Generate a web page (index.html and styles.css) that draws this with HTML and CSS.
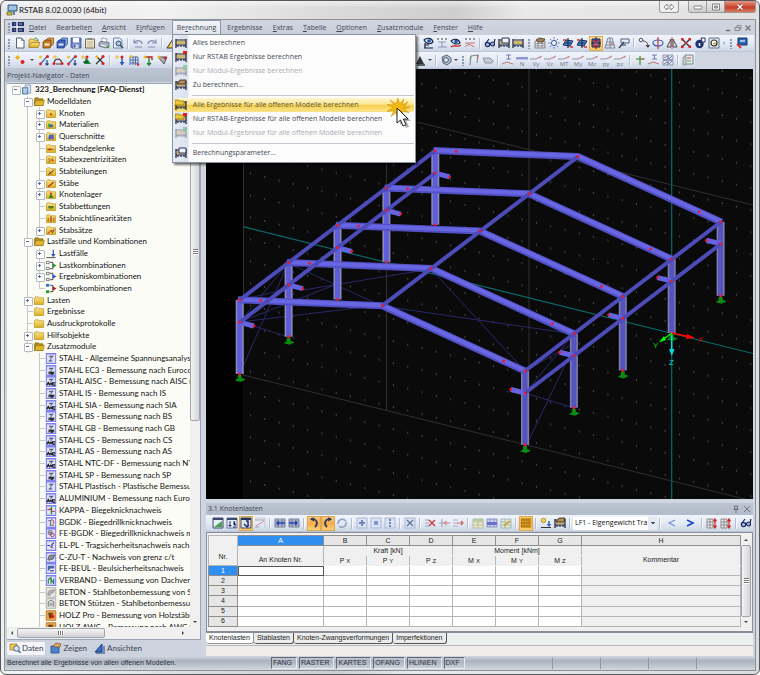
FILE: index.html
```html
<!DOCTYPE html>
<html lang="de">
<head>
<meta charset="utf-8">
<title>RSTAB 8.02.0030 (64bit)</title>
<link rel="stylesheet" href="styles.css">
</head>
<body>
<svg class="sprite" aria-hidden="true">
  <defs>
    <linearGradient id="gold" x1="0" y1="0" x2="0" y2="1"><stop offset="0" stop-color="#fbe58a"/><stop offset="1" stop-color="#dcae1c"/></linearGradient>
  </defs>
  <!-- navigator -->
  <symbol id="folder" viewBox="0 0 12 12"><path d="M1 3.2 2 2h3.2l.9 1H11v7.4H1z" fill="url(#gold)" stroke="#b08a20" stroke-width=".7"/></symbol>
  <symbol id="open" viewBox="0 0 12 12"><path d="M1 3.2 2 2h3.2l.9 1H10.4v7.4H1z" fill="#b08c18" stroke="#806410" stroke-width=".7"/><path d="M1 10.4 2.6 5H12l-1.6 5.4z" fill="#dfb62e" stroke="#806410" stroke-width=".5"/></symbol>
  <symbol id="root" viewBox="0 0 12 12"><path d="M4 1h6v9H4z" fill="#cfe0f2" stroke="#6d8cb0" stroke-width=".8"/><path d="M1 4h6v7H1z" fill="#7ba2cc" stroke="#446a94" stroke-width=".8"/><path d="M2 6h4M2 8h4M3 4v7M5 4v7M8 2v8" stroke="#e7f1fb" stroke-width=".6"/></symbol>
  <symbol id="f-node" viewBox="0 0 12 12"><use href="#folder"/><circle cx="6" cy="6.8" r="1.1" fill="#d11"/></symbol>
  <symbol id="f-mat" viewBox="0 0 12 12"><use href="#folder"/><path d="M3 5h2v4H3z" fill="#3a9b3a"/><path d="M5 6h3v3H5z" fill="#2f60c0"/></symbol>
  <symbol id="f-sec" viewBox="0 0 12 12"><use href="#folder"/><path d="M4 4h5v5H3z" fill="#3465d0"/><path d="m5 9 4-4" stroke="#e44"/></symbol>
  <symbol id="f-hinge" viewBox="0 0 12 12"><use href="#folder"/><path d="M2 7h7" stroke="#7a5a10"/><circle cx="4.5" cy="7" r="1.2" fill="#d22"/></symbol>
  <symbol id="f-ecc" viewBox="0 0 12 12"><use href="#folder"/><path d="m3 9 5-4M3 5l2 1" stroke="#8a5010"/><circle cx="8" cy="7" r="1" fill="#c33"/></symbol>
  <symbol id="f-div" viewBox="0 0 12 12"><use href="#folder"/><path d="m3 9.5 6-5" stroke="#223"/><path d="m4 6 3 3" stroke="#c22" stroke-width=".8"/></symbol>
  <symbol id="f-bar" viewBox="0 0 12 12"><use href="#folder"/><path d="m3 9.5 6-5" stroke="#b52222" stroke-width="1.2"/></symbol>
  <symbol id="f-sup" viewBox="0 0 12 12"><use href="#folder"/><path d="m6 5 2.5 4.5h-5z" fill="#168a16"/><circle cx="6" cy="4.8" r="1" fill="#d11"/></symbol>
  <symbol id="f-bed" viewBox="0 0 12 12"><use href="#folder"/><path d="M3 6.5h6" stroke="#165016" stroke-width="1.4"/><path d="m4 9 2-2 2 2" stroke="#168a16" fill="none"/></symbol>
  <symbol id="f-nl" viewBox="0 0 12 12"><use href="#folder"/><path d="M6 3.5v6" stroke="#c22" stroke-width="1.3"/><path d="M3 5v4M9 5v4" stroke="#8a6a10"/></symbol>
  <symbol id="f-set" viewBox="0 0 12 12"><use href="#folder"/><path d="m2.5 9.5 4-4 1 3 2-4" stroke="#8c1c1c" fill="none"/></symbol>
  <symbol id="lf" viewBox="0 0 12 12"><path d="M1 10.5h10" stroke="#444"/><path d="M8.5 2v6" stroke="#3559b8" stroke-width="1.4"/><path d="M6 6.5h5L8.500 10z" fill="#3559b8"/></symbol>
  <symbol id="lk" viewBox="0 0 12 12"><path d="M1 1.500h3v2.500H1zM1 8h3v2.500H1z" fill="#fff" stroke="#555" stroke-width=".8"/><path d="M5 2.500h3v7H5" fill="none" stroke="#333"/><path d="m8 3.500 4 2.500-4 2.500z" fill="#1d9a2a"/></symbol>
  <symbol id="ek" viewBox="0 0 12 12"><path d="M1 1.500h3v2.500H1zM1 8h3v2.500H1z" fill="#fff" stroke="#555" stroke-width=".8"/><path d="M5 2.500h3v7H5" fill="none" stroke="#333"/><path d="m8 3.500 4 2.500-4 2.500z" fill="#2b6bd4"/></symbol>
  <symbol id="sk" viewBox="0 0 12 12"><path d="M.6 1h3.500v3H.6z" fill="#2b6bd4"/><path d="M.6 8h3.500v3H.6z" fill="#1d9a2a"/><path d="M5 2.500h3v7H5" fill="none" stroke="#333"/><path d="m8 3.500 4 2.500-4 2.500z" fill="#c81818"/></symbol>
  <symbol id="box" viewBox="0 0 12 12"><path d="M.8.8h10.400v10.400H.8z" fill="#dfe2f4" stroke="#8080f0" stroke-width="1.400"/></symbol>
  <symbol id="m-i" viewBox="0 0 12 12"><use href="#box"/><path d="M4 3h5L8 4.500H7L6 8h1.500L7 9.200H3L3.800 8H5l1-3.500H4z" fill="#56627e"/></symbol>
  <symbol id="m-s1" viewBox="0 0 12 12"><use href="#m-i"/><path d="M4 10V7M6 10V8h1.500v2zM9 10V7" stroke="#111" stroke-width="1.100" fill="none"/></symbol>
  <symbol id="m-s2" viewBox="0 0 12 12"><use href="#m-i"/><path d="m1.500 10 1.500-3 1.500 3M6 7.500v2.500M7.500 10V7.500h3M8 10h2.500" stroke="#111" stroke-width="1.200" fill="none"/></symbol>
  <symbol id="m-kappa" viewBox="0 0 12 12"><use href="#box"/><path d="M6.500 2v8" stroke="#188a30" stroke-width="1.400"/><path d="M2 5h4M6 5l-1.500-1.500M10 7H7" stroke="#c22" fill="none"/></symbol>
  <symbol id="m-bgdk" viewBox="0 0 12 12"><use href="#box"/><path d="M3 4h3l-1 5h4" stroke="#556" fill="none"/><path d="M6 3c3 0 4 2 2 5" stroke="#c22" fill="none"/></symbol>
  <symbol id="m-fe" viewBox="0 0 12 12"><use href="#box"/><path d="M3 3h4v4H3zM5 3v4M3 5h4" stroke="#667" stroke-width=".8" fill="none"/><circle cx="7.500" cy="7.500" r="2" stroke="#a34" fill="none"/></symbol>
  <symbol id="m-elpl" viewBox="0 0 12 12"><use href="#box"/><path d="M2 6h3M7 9V5l2-2" stroke="#2244b0" fill="none" stroke-width="1.200"/><path d="M5 7.500h2" stroke="#c22"/></symbol>
  <symbol id="m-czut" viewBox="0 0 12 12"><use href="#box"/><path d="m2.500 8 1.500-4 6-1-1.500 4.500-5 1.500z" fill="#8b93a3" stroke="#333" stroke-width=".7"/></symbol>
  <symbol id="m-beul" viewBox="0 0 12 12"><use href="#box"/><path d="M2.500 3v6l3-3h4V3z" fill="#4468a8"/><path d="M5 8.500h4" stroke="#222"/></symbol>
  <symbol id="m-verb" viewBox="0 0 12 12"><use href="#box"/><path d="M3 9.500V5l3-2v6.500M6 4l3 5.500" stroke="#14802a" fill="none" stroke-width="1.100"/><path d="M9 4v5.500" stroke="#24b"/></symbol>
  <symbol id="m-beton" viewBox="0 0 12 12"><path d="M.8.8h10.400v10.400H.8z" fill="#e6e6e2" stroke="#aaa"/><path d="m2.500 7 1.500-3 6-1-2 3.500h-2L5 9H2.500z" fill="#b5b5b0" stroke="#777" stroke-width=".6"/></symbol>
  <symbol id="m-stz" viewBox="0 0 12 12"><path d="M.8.8h10.400v10.400H.8z" fill="#e6e6e2" stroke="#aaa"/><path d="M3 9.500V4l3-1.500L9 4v5.500M5 9V5M7 9V5" stroke="#777" fill="none"/></symbol>
  <symbol id="m-holz" viewBox="0 0 12 12"><path d="M.8.8h10.400v10.400H.8z" fill="#e8a552" stroke="#c07a28"/><path d="M3 3h5v2H6v4H4z" fill="#6b3c12"/><circle cx="7.500" cy="7" r="2" fill="#c8201c"/></symbol>
  <!-- toolbars -->
  <symbol id="new" viewBox="0 0 12 12"><path d="M2.500 1h5L10 3.500V11H2.500z" fill="#fff" stroke="#56606e"/><path d="M7.500 1v2.500H10" fill="none" stroke="#56606e" stroke-width=".7"/></symbol>
  <symbol id="openf" viewBox="0 0 12 12"><path d="M1 10.500V3l1-1h3l1 1.200h4v2" fill="#f3d268" stroke="#a77f1a" stroke-width=".8"/><path d="m1 10.500 2.200-5H12l-2 5z" fill="url(#gold)" stroke="#a77f1a" stroke-width=".8"/><path d="M6 2c2-2 4 0 4 1.500" stroke="#2f9030" fill="none"/></symbol>
  <symbol id="stack" viewBox="0 0 12 12"><path d="M4 3 6 1h5.500v6L9.500 9z" fill="#e2a048" stroke="#7a4a10" stroke-width=".7"/><path d="M1 5 3 3h6v6l-1 2H1z" fill="#c47a24" stroke="#5c3608" stroke-width=".7"/><path d="M2.500 6.500h5v2h-5z" fill="#fff3d0"/></symbol>
  <symbol id="stackb" viewBox="0 0 12 12"><path d="M4 3 6 1h5.500v6L9.500 9z" fill="#8aa8e0" stroke="#20408c" stroke-width=".7"/><path d="M1 5 3 3h6v6l-1 2H1z" fill="#3c64bc" stroke="#183070" stroke-width=".7"/><path d="M2.500 6.500h5v2h-5z" fill="#dfe9ff"/></symbol>
  <symbol id="save" viewBox="0 0 12 12"><path d="M1 1h10v10H2L1 10z" fill="#6a86c6" stroke="#38508c" stroke-width=".8"/><path d="M3 1h6v4.500H3z" fill="#fff"/><path d="M3.500 7.500h5V11h-5z" fill="#d7dde8"/><path d="M4 8h1.500v2.500H4z" fill="#38508c"/></symbol>
  <symbol id="clip" viewBox="0 0 12 12"><path d="M1.500 2h9v9h-9z" fill="#f3ead0" stroke="#77684a"/><path d="M3.500 1h5v2h-5z" fill="#8c8c8c"/><path d="M3 5h6M3 7h6M3 9h6" stroke="#a89a78" stroke-width=".7"/></symbol>
  <symbol id="print" viewBox="0 0 12 12"><path d="m3 5 1-4 5 1-.5 3" fill="#fff" stroke="#778" stroke-width=".7"/><path d="m1 6 2-1.500 8 1V9l-3 2-7-2z" fill="#a9b3c4" stroke="#56606e" stroke-width=".8"/><path d="m3 8 5 1.300" stroke="#fff"/><circle cx="10" cy="10" r="1.300" fill="#4a9a4a"/></symbol>
  <symbol id="preview" viewBox="0 0 12 12"><path d="M1.500 1h6L10 3v8H1.500z" fill="#e7eefa" stroke="#56709a" stroke-width=".8"/><circle cx="6.500" cy="6.500" r="2.500" fill="#aac8ee" stroke="#345"/><path d="m8.300 8.300 2.700 2.700" stroke="#345" stroke-width="1.500"/></symbol>
  <symbol id="undo" viewBox="0 0 12 12"><path d="M2 2.500V6h4" fill="none" stroke="#8090b0" stroke-width="1.200"/><path d="M2.500 5.500C5 2.500 10 3.500 10 7M3 10h7" fill="none" stroke="#8090b0" stroke-width="1.200"/></symbol>
  <symbol id="redo" viewBox="0 0 12 12"><path d="M10 2.500V6H6" fill="none" stroke="#8090b0" stroke-width="1.200"/><path d="M9.500 5.500C7 2.500 2 3.500 2 7M2 10h7" fill="none" stroke="#8090b0" stroke-width="1.200"/></symbol>
  <symbol id="tri" viewBox="0 0 12 12"><path d="M1 11 7 2l5 9z" fill="#f5d24a" stroke="#333"/></symbol>
  <symbol id="barload" viewBox="0 0 12 12"><path d="m2.500 10 7-8" stroke="#4c6ca0" stroke-width="1.300"/><circle cx="2.500" cy="3" r="1.500" fill="#f0c030"/><circle cx="9.500" cy="2.500" r="1.500" fill="#d22"/><circle cx="2.500" cy="10" r="1.400" fill="#d22"/><path d="M9 6v5M7.500 9.500 9 11l1.500-1.500" stroke="#27408c" fill="none" stroke-width="1.200"/></symbol>
  <symbol id="spark" viewBox="0 0 12 12"><path d="M3.500 1v5M1 3.500h5M2 2l3 3M5 2 2 5" stroke="#f0b820"/><circle cx="8.500" cy="8" r="2" fill="#d22"/></symbol>
  <symbol id="arc" viewBox="0 0 12 12"><path d="M2 10c0-6 7-7 8 0M4 10h5" stroke="#444" fill="none" stroke-width="1.200"/><path d="M3 1v4M1 3h4" stroke="#f0b820"/><circle cx="2" cy="9.500" r="1.500" fill="#d22"/><circle cx="10" cy="9.500" r="1.500" fill="#d22"/></symbol>
  <symbol id="sup" viewBox="0 0 12 12"><path d="M3 1v4M1 3h4" stroke="#f0b820"/><path d="m6 3 5 7H4z" fill="#1c8c30"/><circle cx="7" cy="3" r="1.500" fill="#d22"/><path d="M3 8h5" stroke="#123"/></symbol>
  <symbol id="cross" viewBox="0 0 12 12"><path d="m2 2 8 8M10 2l-8 8" stroke="#333" stroke-width="1.200"/><circle cx="9" cy="2.500" r="1.500" fill="#d22"/><circle cx="3" cy="3" r="1.500" fill="#f0b820"/><circle cx="9" cy="9.500" r="1.500" fill="#d22"/></symbol>
  <symbol id="nload" viewBox="0 0 12 12"><path d="M3 1v4M1 3h4" stroke="#f0b820"/><path d="M8 4v7" stroke="#3559b8" stroke-width="1.500"/><path d="M5.500 8h5L8 11.500z" fill="#3559b8"/><circle cx="8" cy="3" r="1.500" fill="#d22"/></symbol>
  <symbol id="newlc" viewBox="0 0 12 12"><circle cx="3.500" cy="3.500" r="2.300" fill="#f3d25a" stroke="#a98418" stroke-width=".8"/><path d="M1 10.500h10" stroke="#333"/><path d="M9 4v4" stroke="#3559b8" stroke-width="1.500"/><path d="M6.800 7h4.400L9 10z" fill="#3559b8"/></symbol>
  <symbol id="grid" viewBox="0 0 12 12"><path d="M2 3h8v8M2 3v8M2 6h8M2 9h8M5 3v8M7.500 3v8" stroke="#4b66a6" fill="none"/><circle cx="3" cy="2.500" r="1.500" fill="#f0b820"/><circle cx="10" cy="10.500" r="1.300" fill="#d22"/></symbol>
  <symbol id="rot" viewBox="0 0 12 12"><path d="M7 4v7M5 9l2 2 2-2" stroke="#1c8c30" fill="none" stroke-width="1.400"/><path d="M4 3h6v3" stroke="#b22" fill="none" stroke-width="1.400"/><circle cx="3" cy="3" r="1.500" fill="#f0b820"/></symbol>
  <symbol id="vee" viewBox="0 0 12 12"><path d="M2 3h9L8 10z" fill="#a8b2c0" stroke="#555"/><circle cx="3" cy="3" r="1.500" fill="#f0b820"/><circle cx="9" cy="4" r="1.500" fill="#d22"/></symbol>
  <symbol id="look" viewBox="0 0 12 12"><path d="M2 3c3-3 8-2 9 2-3 3-7 2-9-2z" fill="#d7e6fa" stroke="#16233e" stroke-width="1.100"/><circle cx="7" cy="4" r="1.800" fill="#1d50b0"/><path d="M3 6v5M3 8h4M2 11h9" stroke="#16233e" stroke-width="1.200"/></symbol>
  <symbol id="lookr" viewBox="0 0 12 12"><path d="M1 4c3-3 8-2 9 2-3 2-7 1-9-2z" fill="#d7e6fa" stroke="#16233e" stroke-width="1.100"/><circle cx="6" cy="4.500" r="1.800" fill="#1d50b0"/><path d="M1 10c3-3 6 1 10-2" stroke="#c22" fill="none" stroke-width="1.300"/></symbol>
  <symbol id="xx" viewBox="0 0 12 12"><path d="m1 1 2 2M3 1 1 3M5 1l2 2M7 1 5 3M9 1l2 2M11 1 9 3" stroke="#777" stroke-width=".7"/><path d="M6 5v5M2 10h9M2 5h8" stroke="#8896b8"/></symbol>
  <symbol id="xxr" viewBox="0 0 12 12"><path d="m1 1 2 2M3 1 1 3M5 1l2 2M7 1 5 3M9 1l2 2M11 1 9 3" stroke="#777" stroke-width=".7"/><path d="M1 6h10M1 10c2-3 6-3 9 0" stroke="#c86a6a" fill="none"/></symbol>
  <symbol id="glasses" viewBox="0 0 12 12"><circle cx="3.500" cy="7.500" r="2.200" fill="#9fb6e0" stroke="#1c2c5c" stroke-width="1.200"/><circle cx="8.500" cy="7" r="2" fill="#9fb6e0" stroke="#1c2c5c" stroke-width="1.200"/><path d="M2 6 5 2M10 6l1-4" stroke="#1c2c5c" stroke-width="1.200"/></symbol>
  <symbol id="calc" viewBox="0 0 12 12"><path d="M1 2v9M11 2v9M1 3h10M1 8h10" stroke="#1a1e2c" stroke-width="1.200"/><path d="M3 4v3M5 4v3M7 4v3M9 4v3" stroke="#c99a18" stroke-width="1.300"/><path d="M3 8v2M6 8v2M9 8v2" stroke="#25315a" stroke-width="1.200"/></symbol>
  <symbol id="calcr" viewBox="0 0 12 12"><use href="#calc"/><path d="M8 0h4v3H8z" fill="#d22"/></symbol>
  <symbol id="calcg" viewBox="0 0 12 12"><g opacity=".4"><use href="#calc"/><path d="M8 0h4v5H8z" fill="#2a9a3a"/></g></symbol>
  <symbol id="calch" viewBox="0 0 12 12"><use href="#calc"/><path d="m2 5 3-4h6l-1 4z" fill="#b58e62" stroke="#332211" stroke-width=".8"/></symbol>
  <symbol id="calcf" viewBox="0 0 12 12"><use href="#calc"/><path d="M0 6V1h4l1 1h4v4z" fill="#eac538" stroke="#8a6a10" stroke-width=".7"/></symbol>
  <symbol id="calcfr" viewBox="0 0 12 12"><use href="#calcf"/><path d="M8 0h4v3H8z" fill="#d22"/></symbol>
  <symbol id="calcw" viewBox="0 0 12 12"><use href="#calc"/><path d="M4 1h7v5H4z" fill="#eef3fb" stroke="#28365a"/></symbol>
  <symbol id="table" viewBox="0 0 12 12"><path d="M1 4h10v7H1z" fill="#e6e9ef" stroke="#666" stroke-width=".7"/><path d="M1 6.500h10M1 8.800h10M4 4v7M8 4v7" stroke="#777" stroke-width=".7"/><path d="m2 3 3-2 6 1-2 3H4z" fill="#a47f58" stroke="#33271a" stroke-width=".7"/></symbol>
  <symbol id="sun" viewBox="0 0 12 12"><path d="M6 0v12M0 6h12M2 2l8 8M10 2l-8 8" stroke="#4b6cc0" stroke-dasharray="1.500 1"/><circle cx="6" cy="6" r="2.500" fill="#fff" stroke="#2c4ca0"/></symbol>
  <symbol id="plane" viewBox="0 0 12 12"><path d="m1 8 3-5 7 1-3 5z" fill="#4d8ad8" stroke="#173460"/><path d="M6 1v10M3 6h6" stroke="#1c2c4c" stroke-width="1.200"/><path d="M1 3h3M8 10h3" stroke="#d33" stroke-width="1.300"/></symbol>
  <symbol id="planer" viewBox="0 0 12 12"><path d="M2 2h8v8H2z" fill="#4a78c0" stroke="#142850"/><path d="M4 4h4v5H4z" fill="#fff" stroke="#d22" stroke-width="1.500"/><path d="M6 0v12M1 6h10" stroke="#142850"/></symbol>
  <symbol id="mesh" viewBox="0 0 12 12"><path d="M4 1h4l3 10H1zM3 5h6M2 8h8M6 1v10" stroke="#7b8699" fill="none"/><path d="M6 6h3v2H6z" fill="#c88"/></symbol>
  <symbol id="ptr" viewBox="0 0 12 12"><path d="M3 2h8v4H3z" fill="#e6edf8" stroke="#4c6080"/><path d="M1 11 6 5M3 8h5" stroke="#335" stroke-width="1.200"/></symbol>
  <symbol id="move" viewBox="0 0 12 12"><circle cx="3" cy="3" r="1.800" fill="none" stroke="#555"/><path d="M5 4c4 0 5 3 5 6" fill="none" stroke="#444"/><path d="M7.500 8 10 11l2-3z" fill="#444"/></symbol>
  <symbol id="orbit" viewBox="0 0 12 12"><ellipse cx="6" cy="6" rx="5" ry="3" fill="none" stroke="#3a62bc" stroke-width="1.200"/><path d="M6 0v12" stroke="#c33" stroke-width="1.200"/></symbol>
  <symbol id="mirror" viewBox="0 0 12 12"><path d="M5 2v8H1zM7 2v8h4z" fill="none" stroke="#444"/><path d="M6 0v12" stroke="#c33" stroke-width=".8"/></symbol>
  <symbol id="redx" viewBox="0 0 12 12"><path d="m2 2 8 8M10 2l-8 8" stroke="#333" stroke-width="1.400"/><path d="M1 1h2.500v2.500H1zM8.500 1H11v2.500H8.500zM1 8.500h2.500V11H1zM8.500 8.500H11V11H8.500zM5 5h2v2H5z" fill="#d22"/></symbol>
  <symbol id="info" viewBox="0 0 12 12"><circle cx="5.500" cy="7" r="4.200" fill="#1e3270"/><path d="M5.500 6v3" stroke="#fff" stroke-width="1.500"/><path d="M7 1h4v4H8z" fill="#fff" stroke="#1e3270"/></symbol>
  <symbol id="pic" viewBox="0 0 12 12"><path d="M1 1h10v10H1z" fill="#dce3ef" stroke="#6b7586"/><circle cx="6" cy="6" r="3" fill="#fff" stroke="#333" stroke-width="1.200"/><circle cx="6.500" cy="6.500" r="1.200" fill="#c49a2c"/></symbol>
  <symbol id="screen" viewBox="0 0 12 12"><path d="M2 1h9v7H2z" fill="#2f66b8" stroke="#173460"/><path d="M4 3h5v2H4z" fill="#9cc4f2"/><path d="m1 7 4 4" stroke="#d33" stroke-width="2"/></symbol>
  <symbol id="ball" viewBox="0 0 12 12"><path d="M2 3 7 1l4 3v4l-4 3-4-2z" fill="#b4c0d2" stroke="#5b6778"/><circle cx="6" cy="6" r="2.400" fill="#e3e9f2" stroke="#475465"/></symbol>
  <symbol id="brush" viewBox="0 0 12 12"><path d="m2 10 4-8 4 8z" fill="#333"/><path d="M3 11h8" stroke="#333" stroke-width="1.500"/></symbol>
  <symbol id="frame" viewBox="0 0 12 12"><path d="M2 11 3 2l7-1-1 8" fill="none" stroke="#8a93a3" stroke-width="1.200"/><path d="M3 2 2 6" stroke="#4a4"/><path d="m10 1-.5 4" stroke="#c55"/></symbol>
  <symbol id="tag" viewBox="0 0 12 12"><path d="M1 4h7l3 3-1 2H3z" fill="#c6ccd6" stroke="#9098a8"/></symbol>
  <symbol id="ibeam" viewBox="0 0 12 12"><path d="M4 1h5M6.500 1v4M4 5h5" stroke="#6c7fb4"/><path d="m0 10 5-2 6 2" stroke="#b77" fill="none"/></symbol>
  <symbol id="dg" viewBox="0 0 12 12"><path d="M0 4h6l6-3" stroke="#8d96a8" fill="none"/><path d="m6 3.500 5-2.500v2z" fill="#e09090"/></symbol>
  <symbol id="dgn" viewBox="0 0 12 12"><path d="M0 2h12v2.500H0z" fill="#8f97d8"/></symbol>
  <symbol id="axes" viewBox="0 0 12 12"><path d="M6 2v9M2 5h8" stroke="#5aa25a" stroke-width="1.500"/><path d="M6 5h5" stroke="#c66"/></symbol>
  <symbol id="quad" viewBox="0 0 12 12"><path d="M1 1h4.500v4.500H1zM6.500 1H11v4.500H6.500zM1 6.500h4.500V11H1zM6.500 6.500H11V11H6.500z" fill="#e3e6ee" stroke="#7c84a6" stroke-width=".8"/><path d="m2 4 3-2M7 5l3-3M2 10l3-2M7 10l3-3" stroke="#7c84a6"/></symbol>
  <symbol id="pal" viewBox="0 0 12 12"><path d="M3 1h8v9H3z" fill="#e6e9ee" stroke="#788"/><path d="M1 3h3v8H1z" fill="#c4cad4" stroke="#788" stroke-width=".7"/><path d="M5 3h4v2H5z" fill="#d99"/><path d="M5 6h4v2H5z" fill="#9c9"/></symbol>
  <!-- load table toolbar -->
  <symbol id="t-a" viewBox="0 0 12 12"><path d="M1 1h10v10H1z" fill="#e9eef6" stroke="#3b4a6c"/><path d="M2 10 10 4v6z" fill="#4ba04b"/><path d="M1 2h10" stroke="#3b4a6c" stroke-width="2"/></symbol>
  <symbol id="t-b" viewBox="0 0 12 12"><path d="M1 1h10v10H1z" fill="#e9eef6" stroke="#6c7894"/><path d="M1 2h10" stroke="#3b4a6c" stroke-width="2"/><path d="M4 4v6M2.500 8.500h3M8 4v4h2M7 10h3" stroke="#1a2a6a"/></symbol>
  <symbol id="t-c" viewBox="0 0 12 12"><path d="M1 1h10v10H1z" fill="#dfe3ea" stroke="#3b4a6c"/><path d="M1 2h10" stroke="#27345a" stroke-width="2"/><path d="M6 4h2v5M4 7l3 3 2-2" stroke="#1a2a6a" fill="none" stroke-width="1.500"/></symbol>
  <symbol id="t-d" viewBox="0 0 12 12"><path d="M1 3h10M1 10h4" stroke="#9aa3b4"/><path d="m2 9 8-5" stroke="#cf9090"/><path d="M1 1h10v10" fill="none" stroke="#c4cad6"/></symbol>
  <symbol id="t-l" viewBox="0 0 12 12"><path d="M1 2h10v8H1zM1 4h10M1 8h10M4 2v8M8 2v8" fill="#dde3ee" stroke="#56627e" stroke-width=".8"/><path d="M11 6H4" stroke="#2244b0" stroke-width="1.600"/><path d="M5 3.500 1.500 6 5 8.500z" fill="#2244b0"/></symbol>
  <symbol id="t-r" viewBox="0 0 12 12"><path d="M1 2h10v8H1zM1 4h10M1 8h10M4 2v8M8 2v8" fill="#dde3ee" stroke="#56627e" stroke-width=".8"/><path d="M1 6h7" stroke="#2244b0" stroke-width="1.600"/><path d="M7 3.500 10.500 6 7 8.500z" fill="#2244b0"/></symbol>
  <symbol id="t-cw" viewBox="0 0 12 12"><path d="M3 2c5-1 8 4 4 8" fill="none" stroke="#2b3a60" stroke-width="1.800"/><path d="M5.500 0 2 2.500l4 2z" fill="#2b3a60"/></symbol>
  <symbol id="t-ccw" viewBox="0 0 12 12"><path d="M9 2C4 1 1 6 5 10" fill="none" stroke="#2b3a60" stroke-width="1.800"/><path d="M6.500 0 10 2.500l-4 2z" fill="#2b3a60"/></symbol>
  <symbol id="t-ref" viewBox="0 0 12 12"><path d="M2 7c0-5 5-6 8-3M10 5c1 4-4 7-7 4" fill="none" stroke="#8ea0c4" stroke-width="1.500"/></symbol>
  <symbol id="t-p" viewBox="0 0 12 12"><path d="M1 1h10v10H1z" fill="#dce4f4" stroke="#a9b6d4"/><path d="M6 3v6M3 6h6" stroke="#6e86c8" stroke-width="2"/></symbol>
  <symbol id="t-q" viewBox="0 0 12 12"><path d="M1 1h10v10H1z" fill="#dce4f4" stroke="#a9b6d4"/><path d="M4 4h4v4H4z" fill="#8296d0"/></symbol>
  <symbol id="t-v" viewBox="0 0 12 12"><path d="M1 1h10v10H1z" fill="#dce4f4" stroke="#a9b6d4"/><path d="M6 2v8" stroke="#6e86c8" stroke-width="2" stroke-dasharray="2 1"/></symbol>
  <symbol id="t-x" viewBox="0 0 12 12"><path d="M1 1h10v10H1z" fill="#dce2ee" stroke="#a9b6d4"/><path d="m3 3 6 6M9 3 3 9" stroke="#60749c" stroke-width="1.400"/></symbol>
  <symbol id="t-del" viewBox="0 0 12 12"><path d="M1 3h4M1 6h4M1 9h4" stroke="#9aa3b4"/><path d="m5 3 6 6M11 3 5 9" stroke="#c44" stroke-width="1.500"/></symbol>
  <symbol id="t-in" viewBox="0 0 12 12"><path d="M4 2v8M1 6h5" stroke="#9aa3b4"/><path d="M12 6H7M8.500 4 6.500 6l2 2" stroke="#c88" fill="none" stroke-width="1.200"/></symbol>
  <symbol id="t-out" viewBox="0 0 12 12"><path d="M1 3h5M1 6h4M1 9h5" stroke="#aab2c2"/><path d="M5 6h6M9 4l2 2-2 2" stroke="#c66" fill="none" stroke-width="1.200"/></symbol>
  <symbol id="t-y" viewBox="0 0 12 12"><path d="M1 2h10v9H1zM1 5h10M1 8h10M6 2v9" fill="#f2eeb8" stroke="#a5aeb0" stroke-width=".8"/><path d="M1 2h10v2H1z" fill="#b0cc8c"/></symbol>
  <symbol id="t-bl" viewBox="0 0 12 12"><path d="M1 2h10v8H1zM4 2v8M8 2v8" fill="#cfd4f2" stroke="#7a80b8" stroke-width=".8"/><path d="M1 5h10v3H1z" fill="#6a70c8"/></symbol>
  <symbol id="t-ed" viewBox="0 0 12 12"><path d="M1 2h10v9H1zM1 5h10M1 8h10M5 2v9" fill="#e6ecd8" stroke="#9aa" stroke-width=".8"/><path d="m4 9 6-5" stroke="#c9a93c" stroke-width="1.800"/></symbol>
  <symbol id="t-gold" viewBox="0 0 12 12"><path d="M1 1h10v10H1z" fill="#d09820"/><path d="M1 3h10M1 6h10M1 9h10" stroke="#7c4c08" stroke-dasharray="1.500 1"/></symbol>
  <symbol id="t-lt" viewBox="0 0 12 12"><path d="M9 3 3 6l6 3" fill="none" stroke="#6e92e0" stroke-width="1.200"/></symbol>
  <symbol id="t-gt" viewBox="0 0 12 12"><path d="m3 3 6 3-6 3" fill="none" stroke="#1c44c4" stroke-width="1.600"/></symbol>
  <symbol id="t-up" viewBox="0 0 12 12"><path d="M1 2h6v9H1zM1 5h6M1 8h6M4 2v9" fill="#eee" stroke="#777" stroke-width=".8"/><path d="M9 11V3M7.500 4.500 9 2l1.500 2.500M7.500 8.500 9 11l1.500-2.500" stroke="#c22" fill="none" stroke-width="1.200"/></symbol>
  <symbol id="disk" viewBox="0 0 12 12"><path d="M1 2h7v6H1z" fill="#f0c850" stroke="#9a7818" stroke-width=".7"/><circle cx="7.500" cy="6.500" r="2.800" fill="#d8e6f6" stroke="#46608c"/><path d="m9.500 8.500 2 2.500" stroke="#46608c" stroke-width="1.300"/></symbol>
  <symbol id="disp" viewBox="0 0 12 12"><path d="M1 4h8v7H1z" fill="#4c84cc" stroke="#234c88" stroke-width=".8"/><path d="m3 4 3-3 5 1-1 3H5z" fill="#e0a868" stroke="#7a5020" stroke-width=".7"/></symbol>
  <symbol id="views" viewBox="0 0 12 12"><path d="M1 10 8 2v8z" fill="#3a6cc8" stroke="#1c3c80"/><path d="M2 11h9M10 4v6" stroke="#1c3c80"/></symbol>
</svg>

<div class="window">
  <header class="titlebar">
    <svg class="ic" viewBox="0 0 12 12"><path d="M2 1h9v6H2z" fill="#6a9cc8" stroke="#3a6690"/><path d="M3 3h7M3 5h7" stroke="#d8eafa"/><path d="M1 8h5v3H1z" fill="#d8b83a" stroke="#5a6a30" stroke-width=".8"/><path d="M8 7v4" stroke="#3a6690" stroke-width="1.500"/></svg>
    <h1>RSTAB 8.02.0030 (64bit)</h1>
    <button class="swap" aria-label="Fenster verschieben"><svg viewBox="0 0 12 8"><path d="M1 4 4 1v2h4V1l3 3-3 3V5H4v2z" fill="#fff" stroke="#777" stroke-width=".8"/></svg></button>
    <div class="wbtns">
      <button aria-label="Minimieren"><svg viewBox="0 0 12 8"><rect x="2" y="3" width="8" height="3" rx="1" fill="#fff" stroke="#666" stroke-width=".8"/></svg></button>
      <button aria-label="Wiederherstellen"><svg viewBox="0 0 12 8"><path d="M2.500 1h7v6h-7z" fill="#fff" stroke="#666" stroke-width=".8"/><path d="M4.500 3h3v2h-3z" fill="#ccc" stroke="#666" stroke-width=".8"/></svg></button>
      <button class="close" aria-label="Schließen"><svg viewBox="0 0 12 8"><path d="m3.500 1.500 5 5M8.500 1.500l-5 5" stroke="#7a2018" stroke-width="2.600"/><path d="m3.500 1.500 5 5M8.500 1.500l-5 5" stroke="#fff" stroke-width="1.600"/></svg></button>
    </div>
  </header>

  <div class="client">
    <nav class="menubar">
      <i class="grip"></i>
      <svg class="logo" viewBox="0 0 12 10"><path d="M0 0h12v10H0z" fill="#25356c"/><path d="M0 5h12M5 0v10" stroke="#fff" stroke-width="1.300"/><path d="M2 2h1M7 2h3M2 8h1M7 8h3" stroke="#9fb0dc"/></svg>
      <button><u>D</u>atei</button><button>Bearbeite<u>n</u></button><button><u>A</u>nsicht</button><button>E<u>i</u>nfügen</button>
      <div class="drop">
        <button class="active" aria-expanded="true">Be<u>r</u>echnung</button>
        <div class="menu" role="menu">
          <button role="menuitem"><svg class="ic"><use href="#calc"/></svg>Alles berechnen</button>
          <button role="menuitem"><svg class="ic"><use href="#calcr"/></svg>Nur RSTAB Ergebnisse berechnen</button>
          <button role="menuitem" disabled><svg class="ic"><use href="#calcg"/></svg>Nur Modul-Ergebnisse berechnen</button>
          <button role="menuitem"><svg class="ic"><use href="#calch"/></svg>Zu berechnen...</button>
          <hr>
          <button role="menuitem" class="hot"><svg class="ic"><use href="#calcf"/></svg>Alle Ergebnisse für alle offenen Modelle berechnen</button>
          <button role="menuitem"><svg class="ic"><use href="#calcfr"/></svg>Nur RSTAB-Ergebnisse für alle offenen Modelle berechnen</button>
          <button role="menuitem" disabled><svg class="ic"><use href="#calcg"/></svg>Nur Modul-Ergebnisse für alle offenen Modelle berechnen</button>
          <hr>
          <button role="menuitem"><svg class="ic"><use href="#calcw"/></svg>Berechnungsparameter...</button>
          <svg class="cursor" viewBox="0 0 28 32"><path d="m12 0 1.500 6L18 1l-2 6 6-3-4 5 6 0-6 2.500 5 3-7-1 2 5-5-4-1 6-2-6-5 4 3-6-7 1 6-4-6-3 7 .5-4-5 6 4z" fill="#f2b90f" stroke="#c48c08" stroke-width=".5"/><path d="M14 12v15l3.500-3 2.500 6 3-1.200-2.600-5.800H25z" fill="#555" opacity=".45"/><path d="M11 10v15l3.500-3 2.500 6 3-1.200-2.600-5.800H22z" fill="#fff" stroke="#222"/></svg>
        </div>
      </div>
      <button>Er<u>g</u>ebnisse</button><button><u>E</u>xtras</button><button><u>T</u>abelle</button><button><u>O</u>ptionen</button><button><u>Z</u>usatzmodule</button><button><u>F</u>enster</button><button><u>H</u>ilfe</button>
      <div class="mdi">
        <button aria-label="Dokument minimieren"><svg viewBox="0 0 8 8"><path d="M2 6.500h4" stroke="#666" stroke-width="1.300"/></svg></button>
        <button aria-label="Dokument wiederherstellen"><svg viewBox="0 0 8 8"><path d="M3 3V1.500h4V5H5.500M1 3.500h4.500v3H1z" fill="none" stroke="#777" stroke-width=".8"/></svg></button>
        <button aria-label="Dokument schließen"><svg viewBox="0 0 8 8"><path d="m1.500 1.500 5 5M6.500 1.500l-5 5" stroke="#777" stroke-width="1.200"/></svg></button>
      </div>
    </nav>

    <div class="toolbar">
      <i class="grip"></i>
      <button aria-label="Neu"><svg class="ic"><use href="#new"/></svg></button><button aria-label="Öffnen"><svg class="ic"><use href="#openf"/></svg></button><button aria-label="Projekt"><svg class="ic"><use href="#stack"/></svg></button><button aria-label="Blockmanager"><svg class="ic"><use href="#stackb"/></svg></button><button aria-label="Speichern"><svg class="ic"><use href="#save"/></svg></button><button aria-label="Zwischenablage"><svg class="ic"><use href="#clip"/></svg></button><button aria-label="Drucken"><svg class="ic"><use href="#print"/></svg></button><button aria-label="Vorschau"><svg class="ic"><use href="#preview"/></svg></button>
      <i class="sep"></i>
      <button aria-label="Rückgängig"><svg class="ic"><use href="#undo"/></svg></button><button aria-label="Wiederholen"><svg class="ic"><use href="#redo"/></svg></button>
      <i class="sep"></i>
      <button aria-label="Bearbeiten"><svg class="ic"><use href="#tri"/></svg></button>
      <div class="right">
        <button aria-label="Verformung"><svg class="ic"><use href="#look"/></svg></button><button aria-label="Werte"><svg class="ic"><use href="#xx"/></svg></button><button aria-label="Ergebnisse"><svg class="ic"><use href="#lookr"/></svg></button><button aria-label="Ergebniswerte"><svg class="ic"><use href="#xxr"/></svg></button>
        <i class="sep"></i>
        <button aria-label="Sichtbarkeit"><svg class="ic"><use href="#glasses"/></svg></button><button aria-label="Berechnungsparameter"><svg class="ic"><use href="#calcw"/></svg></button><button aria-label="Berechnen"><svg class="ic"><use href="#calc"/></svg></button>
        <i class="grip"></i>
        <button aria-label="Tabelle"><svg class="ic"><use href="#table"/></svg></button><button aria-label="Anzeige"><svg class="ic"><use href="#sun"/></svg></button><button aria-label="Ebene XY"><svg class="ic"><use href="#plane"/></svg></button><button aria-label="Ebene YZ"><svg class="ic"><use href="#plane"/></svg></button><button class="on" aria-label="Ebene XZ"><svg class="ic"><use href="#planer"/></svg></button><button aria-label="Netz"><svg class="ic"><use href="#mesh"/></svg></button><button aria-label="Hinweis"><svg class="ic"><use href="#ptr"/></svg></button>
        <i class="sep"></i>
        <button aria-label="Verschieben"><svg class="ic"><use href="#move"/></svg></button><button aria-label="Rotieren"><svg class="ic"><use href="#orbit"/></svg></button><button aria-label="Spiegeln"><svg class="ic"><use href="#mirror"/></svg></button><button aria-label="Verbinden"><svg class="ic"><use href="#redx"/></svg></button><button aria-label="Information"><svg class="ic"><use href="#info"/></svg></button><button aria-label="Bild"><svg class="ic"><use href="#pic"/></svg></button>
        <button class="more" aria-label="Mehr">‹</button>
        <i class="grip"></i>
        <button aria-label="Bildschirm"><svg class="ic"><use href="#screen"/></svg></button><i class="stub"></i>
      </div>
    </div>

    <div class="toolbar second">
      <i class="grip"></i>
      <button aria-label="Knoten"><svg class="ic"><use href="#spark"/></svg></button><button class="arrow wide" aria-label="Knotenauswahl"></button><button aria-label="Stab"><svg class="ic"><use href="#barload"/></svg></button><button aria-label="Bogen"><svg class="ic"><use href="#arc"/></svg></button><button aria-label="Stabsatz"><svg class="ic"><use href="#barload"/></svg></button><button aria-label="Lager"><svg class="ic"><use href="#sup"/></svg></button><button aria-label="Kreuzung"><svg class="ic"><use href="#cross"/></svg></button>
      <i class="sep"></i>
      <button aria-label="Knotenlast"><svg class="ic"><use href="#nload"/></svg></button><button aria-label="Stablast"><svg class="ic"><use href="#grid"/></svg></button><button aria-label="Zwangsverformung"><svg class="ic"><use href="#rot"/></svg></button><button aria-label="Imperfektion"><svg class="ic"><use href="#vee"/></svg></button>
      <div class="right">
        <button aria-label="Farben"><svg class="ic"><use href="#brush"/></svg></button><button class="arrow" aria-label="Farbauswahl"></button>
        <i class="sep"></i>
        <button aria-label="Darstellung"><svg class="ic"><use href="#ball"/></svg></button><button class="arrow" aria-label="Darstellungsart"></button>
        <i class="grip"></i>
        <button aria-label="Rahmen"><svg class="ic"><use href="#frame"/></svg></button><button aria-label="Etikett"><svg class="ic"><use href="#tag"/></svg></button>
        <i class="sep"></i>
        <button aria-label="Profil"><svg class="ic"><use href="#ibeam"/></svg></button><button class="lab n"><svg class="ic"><use href="#dgn"/></svg><span>N</span></button><button class="lab"><svg class="ic"><use href="#dg"/></svg><span>Vy</span></button><button class="lab"><svg class="ic"><use href="#dg"/></svg><span>Vz</span></button><button class="lab"><svg class="ic"><use href="#dg"/></svg><span>MT</span></button><button class="lab"><svg class="ic"><use href="#dg"/></svg><span>My</span></button><button class="lab"><svg class="ic"><use href="#dg"/></svg><span>Mz</span></button><button class="lab"><svg class="ic"><use href="#dg"/></svg><span>py</span></button><button class="lab"><svg class="ic"><use href="#dg"/></svg><span>pz</span></button>
        <i class="sep"></i>
        <button aria-label="Reaktionen"><svg class="ic"><use href="#axes"/></svg></button><button aria-label="Schnitt"><svg class="ic"><use href="#ibeam"/></svg></button><button aria-label="Fensteranordnung"><svg class="ic"><use href="#quad"/></svg></button>
        <i class="sep"></i>
        <button aria-label="Palette"><svg class="ic"><use href="#pal"/></svg></button>
      </div>
    </div>

    <main class="main">
      <section class="navigator">
        <h2 class="ptitle">Projekt-Navigator - Daten</h2>
        <div class="treebox">
          <div class="treeclip">
            <ul class="tree">
              <li class="l0"><button class="x minus" aria-label="Zuklappen"></button><svg class="ic"><use href="#root"/></svg>323_Berechnung [FAQ-Dienst]</li>
              <li class="l1"><button class="x minus" aria-label="Zuklappen"></button><svg class="ic"><use href="#open"/></svg>Modelldaten</li>
              <li class="l2"><button class="x plus" aria-label="Aufklappen"></button><svg class="ic"><use href="#f-node"/></svg>Knoten</li>
              <li class="l2"><button class="x plus" aria-label="Aufklappen"></button><svg class="ic"><use href="#f-mat"/></svg>Materialien</li>
              <li class="l2"><button class="x plus" aria-label="Aufklappen"></button><svg class="ic"><use href="#f-sec"/></svg>Querschnitte</li>
              <li class="l2"><i class="x"></i><svg class="ic"><use href="#f-hinge"/></svg>Stabendgelenke</li>
              <li class="l2"><i class="x"></i><svg class="ic"><use href="#f-ecc"/></svg>Stabexzentrizitäten</li>
              <li class="l2"><i class="x"></i><svg class="ic"><use href="#f-div"/></svg>Stabteilungen</li>
              <li class="l2"><button class="x plus" aria-label="Aufklappen"></button><svg class="ic"><use href="#f-bar"/></svg>Stäbe</li>
              <li class="l2"><button class="x plus" aria-label="Aufklappen"></button><svg class="ic"><use href="#f-sup"/></svg>Knotenlager</li>
              <li class="l2"><i class="x"></i><svg class="ic"><use href="#f-bed"/></svg>Stabbettungen</li>
              <li class="l2"><i class="x"></i><svg class="ic"><use href="#f-nl"/></svg>Stabnichtlinearitäten</li>
              <li class="l2 end"><button class="x plus" aria-label="Aufklappen"></button><svg class="ic"><use href="#f-set"/></svg>Stabsätze</li>
              <li class="l1"><button class="x minus" aria-label="Zuklappen"></button><svg class="ic"><use href="#open"/></svg>Lastfälle und Kombinationen</li>
              <li class="l2"><button class="x plus" aria-label="Aufklappen"></button><svg class="ic"><use href="#lf"/></svg>Lastfälle</li>
              <li class="l2"><button class="x plus" aria-label="Aufklappen"></button><svg class="ic"><use href="#lk"/></svg>Lastkombinationen</li>
              <li class="l2"><button class="x plus" aria-label="Aufklappen"></button><svg class="ic"><use href="#ek"/></svg>Ergebniskombinationen</li>
              <li class="l2 end"><i class="x"></i><svg class="ic"><use href="#sk"/></svg>Superkombinationen</li>
              <li class="l1"><button class="x plus" aria-label="Aufklappen"></button><svg class="ic"><use href="#folder"/></svg>Lasten</li>
              <li class="l1"><i class="x"></i><svg class="ic"><use href="#folder"/></svg>Ergebnisse</li>
              <li class="l1"><i class="x"></i><svg class="ic"><use href="#folder"/></svg>Ausdruckprotokolle</li>
              <li class="l1"><button class="x plus" aria-label="Aufklappen"></button><svg class="ic"><use href="#folder"/></svg>Hilfsobjekte</li>
              <li class="l1"><button class="x minus" aria-label="Zuklappen"></button><svg class="ic"><use href="#open"/></svg>Zusatzmodule</li>
              <li class="l2"><i class="x"></i><svg class="ic"><use href="#m-i"/></svg>STAHL - Allgemeine Spannungsanalys</li>
              <li class="l2"><i class="x"></i><svg class="ic"><use href="#m-s1"/></svg>STAHL EC3 - Bemessung nach Euroco</li>
              <li class="l2"><i class="x"></i><svg class="ic"><use href="#m-s2"/></svg>STAHL AISC - Bemessung nach AISC (</li>
              <li class="l2"><i class="x"></i><svg class="ic"><use href="#m-s1"/></svg>STAHL IS - Bemessung nach IS</li>
              <li class="l2"><i class="x"></i><svg class="ic"><use href="#m-s2"/></svg>STAHL SIA - Bemessung nach SIA</li>
              <li class="l2"><i class="x"></i><svg class="ic"><use href="#m-s1"/></svg>STAHL BS - Bemessung nach BS</li>
              <li class="l2"><i class="x"></i><svg class="ic"><use href="#m-s1"/></svg>STAHL GB - Bemessung nach GB</li>
              <li class="l2"><i class="x"></i><svg class="ic"><use href="#m-s2"/></svg>STAHL CS - Bemessung nach CS</li>
              <li class="l2"><i class="x"></i><svg class="ic"><use href="#m-s2"/></svg>STAHL AS - Bemessung nach AS</li>
              <li class="l2"><i class="x"></i><svg class="ic"><use href="#m-s2"/></svg>STAHL NTC-DF - Bemessung nach NT</li>
              <li class="l2"><i class="x"></i><svg class="ic"><use href="#m-s1"/></svg>STAHL SP - Bemessung nach SP</li>
              <li class="l2"><i class="x"></i><svg class="ic"><use href="#m-i"/></svg>STAHL Plastisch - Plastische Bemessu</li>
              <li class="l2"><i class="x"></i><svg class="ic"><use href="#m-s2"/></svg>ALUMINIUM - Bemessung nach Euroc</li>
              <li class="l2"><i class="x"></i><svg class="ic"><use href="#m-kappa"/></svg>KAPPA - Biegeknicknachweis</li>
              <li class="l2"><i class="x"></i><svg class="ic"><use href="#m-bgdk"/></svg>BGDK - Biegedrillknicknachweis</li>
              <li class="l2"><i class="x"></i><svg class="ic"><use href="#m-fe"/></svg>FE-BGDK - Biegedrillknicknachweis m</li>
              <li class="l2"><i class="x"></i><svg class="ic"><use href="#m-elpl"/></svg>EL-PL - Tragsicherheitsnachweis nach</li>
              <li class="l2"><i class="x"></i><svg class="ic"><use href="#m-czut"/></svg>C-ZU-T - Nachweis von grenz c/t</li>
              <li class="l2"><i class="x"></i><svg class="ic"><use href="#m-beul"/></svg>FE-BEUL - Beulsicherheitsnachweis</li>
              <li class="l2"><i class="x"></i><svg class="ic"><use href="#m-verb"/></svg>VERBAND - Bemessung von Dachverb</li>
              <li class="l2"><i class="x"></i><svg class="ic"><use href="#m-beton"/></svg>BETON - Stahlbetonbemessung von S</li>
              <li class="l2"><i class="x"></i><svg class="ic"><use href="#m-stz"/></svg>BETON Stützen - Stahlbetonbemessur</li>
              <li class="l2"><i class="x"></i><svg class="ic"><use href="#m-holz"/></svg>HOLZ Pro - Bemessung von Holzstäbe</li>
              <li class="l2"><i class="x"></i><svg class="ic"><use href="#m-holz"/></svg>HOLZ AWC - Bemessung nach AWC (</li>
            </ul>
          </div>
          <div class="vbar"><span class="thumb"><i></i></span><span class="cap down"></span></div>
          <div class="hbar"><span class="cap left"></span><span class="thumb"><i></i></span><span class="cap rightc"></span></div>
        </div>
        <div class="navtabs">
          <button class="active"><svg class="ic"><use href="#disk"/></svg>Daten</button>
          <button><svg class="ic"><use href="#disp"/></svg>Zeigen</button>
          <button><svg class="ic"><use href="#views"/></svg>Ansichten</button>
        </div>
      </section>

      <section class="work">
        <div class="view">
          <svg class="scene" viewBox="206 69 547 430" preserveAspectRatio="xMinYMin slice" role="img" aria-label="Stabwerksmodell">
            <defs>
              <pattern id="dots" width="14.300" height="22" patternUnits="userSpaceOnUse" patternTransform="translate(243.300 226.700) skewY(14)"><rect x="6.600" y="10.500" width="1" height="1" fill="#888"/></pattern>
              <g id="portal">
                <path d="M239.700 300v74" stroke="#8c8cb4" stroke-width="8"/><path d="M239.700 299v75" stroke="#5f5dda" stroke-width="5"/>
                <path d="M525 371v74" stroke="#7f7fae" stroke-width="8"/><path d="M525 371v74" stroke="#5553be" stroke-width="5"/>
                <path d="m239.700 322.300 14.300 3.700M525 393l-14.300-3.500" stroke="#6563e2" stroke-width="5"/>
                <path d="m238 299.800 144.300 5.900L526 371.500" stroke="#5350c4" stroke-width="7" fill="none" stroke-linejoin="round"/>
                <path d="m238 299.500 144.300 5.700L526 370.800" stroke="#6866e2" stroke-width="4" fill="none" stroke-linejoin="round"/>
              </g>
              <g id="nodes" fill="#f01828">
                <circle cx="239.700" cy="300" r="1.400"/><circle cx="260.700" cy="300.700" r="1.400"/><circle cx="239.700" cy="322.300" r="1.400"/><circle cx="254" cy="326" r="1.400"/><circle cx="239.700" cy="374" r="1.400"/><circle cx="382.300" cy="305.700" r="1.400"/><circle cx="503.700" cy="361" r="1.400"/><circle cx="525" cy="371" r="1.400"/><circle cx="525" cy="393" r="1.400"/><circle cx="510.700" cy="389.500" r="1.400"/><circle cx="525" cy="445" r="1.400"/>
              </g>
              <path id="foot" d="m-2 1h4v3l4 1.500-5 2.500-6-1.500 3-2z" fill="#0c8a10"/>
            </defs>
            <rect x="206" y="0" width="3000" height="3000" fill="#000"/>
            <rect x="243" y="0" width="3000" height="3000" fill="#0a0a0a"/>
            <rect x="250" y="0" width="3000" height="3000" fill="url(#dots)"/>
            <path d="M243.500 69v306M386.500 69v342M529 69v378M417 122l336 83M243 375l510 126" stroke="#303030" stroke-width="1" fill="none"/>
            <path d="m243 226.700 510 126.800M671.700 69v430" stroke="#066a6a" stroke-width="1.200"/>
            <path d="M239.700 374 288.300 263M254 326l34 11M239.700 322 382 305 M240 300l48-11M288 263l94 43M303 290l128-21M337 284l-97 38M431 269l94 102M382 306l192 28M525 393l49 15M529 440l45-94M525 371l49-28M525 393l49-59M240 322l48-59" stroke="#2a2868" fill="none"/>
            <use href="#foot" x="239.700" y="374"/><use href="#foot" x="288.600" y="336.700"/><use href="#foot" x="525" y="445"/><use href="#foot" x="573.900" y="407.700"/><use href="#foot" x="622.800" y="370.400"/><use href="#foot" x="671.700" y="333.100"/><use href="#foot" x="720.600" y="295.800"/>
            <use href="#portal" x="195.600" y="-149.200"/><use href="#portal" x="146.700" y="-111.900"/><use href="#portal" x="97.800" y="-74.600"/><use href="#portal" x="48.900" y="-37.300"/><use href="#portal"/>
            <path d="m239.700 300 195.600-149.300M239.700 322.300 435.300 173M382.300 305.700l195.700-149M525 371l195.700-149M525 393l195.700-149" stroke="#4d4bb8" stroke-width="4"/>
            <use href="#nodes" x="195.600" y="-149.200"/><use href="#nodes" x="146.700" y="-111.900"/><use href="#nodes" x="97.800" y="-74.600"/><use href="#nodes" x="48.900" y="-37.300"/><use href="#nodes"/>
            <path d="m672 333 16 3.500" stroke="#f00" stroke-width="1.500"/><path d="m687 334 8 4-9 1z" fill="#f00"/>
            <path d="m672 333-9 6.500" stroke="#0f0" stroke-width="1.500"/><path d="m664 336 2 4-7 2.500z" fill="#0f0"/>
            <path d="M671.700 335v15" stroke="#0dd" stroke-width="1.500"/><path d="M669 349h5.500l-2.700 7z" fill="#0dd"/>
            <text x="698" y="342" fill="#c00">X</text><text x="653" y="348" fill="#0d0">Y</text><text x="669" y="365" fill="#0dd">Z</text>
          </svg>
        </div>

        <section class="loads">
          <h2 class="ptitle">3.1 Knotenlasten
            <span class="pin"><button aria-label="Anheften"><svg viewBox="0 0 8 8"><path d="M2.500 1h3v3h-3zM1.500 4.500h5M4 4.500V8" fill="none" stroke="#667" stroke-width=".8"/></svg></button><button aria-label="Schließen"><svg viewBox="0 0 8 8"><path d="m1 1 6 6M7 1 1 7" stroke="#778"/></svg></button></span>
          </h2>
          <div class="toolbar third">
            <button aria-label="Diagramm"><svg class="ic"><use href="#t-a"/></svg></button><button aria-label="Lasten"><svg class="ic"><use href="#t-b"/></svg></button><button class="on" aria-label="Ergebnistabelle"><svg class="ic"><use href="#t-c"/></svg></button><button aria-label="Linie"><svg class="ic"><use href="#t-d"/></svg></button>
            <i class="sep"></i>
            <button aria-label="Vorherige Tabelle"><svg class="ic"><use href="#t-l"/></svg></button><button aria-label="Nächste Tabelle"><svg class="ic"><use href="#t-r"/></svg></button>
            <i class="sep"></i>
            <button class="on strong" aria-label="Zurück"><svg class="ic"><use href="#t-cw"/></svg></button><button class="on strong" aria-label="Vor"><svg class="ic"><use href="#t-ccw"/></svg></button><button aria-label="Aktualisieren"><svg class="ic"><use href="#t-ref"/></svg></button>
            <i class="sep"></i>
            <button aria-label="Zeile einfügen"><svg class="ic"><use href="#t-p"/></svg></button><button aria-label="Zeile wählen"><svg class="ic"><use href="#t-q"/></svg></button><button aria-label="Zeile teilen"><svg class="ic"><use href="#t-v"/></svg></button>
            <i class="sep"></i>
            <button aria-label="Leeren"><svg class="ic"><use href="#t-x"/></svg></button>
            <i class="sep"></i>
            <button aria-label="Löschen"><svg class="ic"><use href="#t-del"/></svg></button><button aria-label="Einrücken"><svg class="ic"><use href="#t-in"/></svg></button><button aria-label="Ausrücken"><svg class="ic"><use href="#t-out"/></svg></button>
            <i class="sep"></i>
            <button aria-label="Filter"><svg class="ic"><use href="#t-y"/></svg></button><button aria-label="Auswahl"><svg class="ic"><use href="#t-bl"/></svg></button><button aria-label="Editieren"><svg class="ic"><use href="#t-ed"/></svg></button>
            <i class="sep"></i>
            <button class="on strong" aria-label="Raster"><svg class="ic"><use href="#t-gold"/></svg></button>
            <i class="sep"></i>
            <button aria-label="Neuer Lastfall"><svg class="ic"><use href="#newlc"/></svg></button><button aria-label="Lastfall bearbeiten"><svg class="ic"><use href="#calch"/></svg></button>
            <i class="sep"></i>
            <label class="combo"><select aria-label="Lastfall"><option>LF1 - Eigengewicht Tra</option></select></label>
            <i class="sep"></i>
            <button class="roomy" aria-label="Voriger"><svg class="ic"><use href="#t-lt"/></svg></button><button class="roomy" aria-label="Nächster"><svg class="ic"><use href="#t-gt"/></svg></button>
            <i class="sep"></i>
            <button aria-label="Export"><svg class="ic"><use href="#t-up"/></svg></button><button aria-label="Import"><svg class="ic"><use href="#t-up"/></svg></button>
            <i class="sep"></i>
            <button aria-label="Anzeigen"><svg class="ic"><use href="#glasses"/></svg></button>
          </div>
          <div class="sheet">
            <table>
              <colgroup><col class="cn"><col class="ca"><col class="cv"><col class="cv"><col class="cv"><col class="cv"><col class="cv"><col class="cv"><col></colgroup>
              <thead>
                <tr class="letters"><th rowspan="3" class="nr">Nr.</th><th class="sel">A</th><th>B</th><th>C</th><th>D</th><th>E</th><th>F</th><th>G</th><th>H</th></tr>
                <tr class="names"><th rowspan="2" class="low">An Knoten Nr.</th><th colspan="3">Kraft [kN]</th><th colspan="3">Moment [kNm]</th><th rowspan="2" class="low">Kommentar</th></tr>
                <tr class="names"><th>P <small>X</small></th><th>P <small>Y</small></th><th>P <small>Z</small></th><th>M <small>X</small></th><th>M <small>Y</small></th><th>M <small>Z</small></th></tr>
              </thead>
              <tbody>
                <tr><th class="sel">1</th><td class="focus"></td><td></td><td></td><td></td><td></td><td></td><td></td><td></td></tr>
                <tr><th>2</th><td></td><td></td><td></td><td></td><td></td><td></td><td></td><td></td></tr>
                <tr><th>3</th><td></td><td></td><td></td><td></td><td></td><td></td><td></td><td></td></tr>
                <tr><th>4</th><td></td><td></td><td></td><td></td><td></td><td></td><td></td><td></td></tr>
                <tr><th>5</th><td></td><td></td><td></td><td></td><td></td><td></td><td></td><td></td></tr>
                <tr><th>6</th><td></td><td></td><td></td><td></td><td></td><td></td><td></td><td></td></tr>
              </tbody>
            </table>
            <div class="vbar"><span class="cap up"></span><span class="thumb"><i></i></span><span class="cap down"></span></div>
          </div>
          <div class="sheettabs"><button class="active">Knotenlasten</button><button>Stablasten</button><button>Knoten-Zwangsverformungen</button><button>Imperfektionen</button></div>
          <div class="strip"></div>
        </section>
      </section>
    </main>

    <footer class="status">
      <p>Berechnet alle Ergebnisse von allen offenen Modellen.</p>
      <button>FANG</button><button>RASTER</button><button>KARTES</button><button>OFANG</button><button>HLINIEN</button><button>DXF</button>
      <div class="cells"><i></i><i></i><i></i><i></i></div>
    </footer>
  </div>
</div>
</body>
</html>
```
FILE: styles.css
```css
* { box-sizing: border-box; }
html, body { height: 100%; margin: 0; }
body {
  background: #fff;
  color: #1c1c1c;
  font: 7px/10px "Open Sans", "Noto Sans", sans-serif;
  overflow: hidden;
}
button {
  margin: 0;
  padding: 0;
  border: 0;
  background: none;
  color: inherit;
  font: inherit;
  cursor: default;
}
h1, h2, p, ul { margin: 0; padding: 0; font: inherit; }
.sprite { position: absolute; width: 0; height: 0; }
.ic { width: 12px; height: 12px; flex: none; display: block; }

/* window frame */
.window {
  height: 100vh;
  display: flex;
  flex-direction: column;
  padding: 0 3px 3px;
  border: 1px solid #55585e;
  border-radius: 6px;
  background: linear-gradient(100deg, #e8e8e8 0, #f2f2f2 18%, #dcdcdc 36%, #cecece 52%, #e9e9e9 60%, #dcdcdc 100%);
}
.titlebar {
  flex: none;
  height: 18px;
  display: flex;
  align-items: center;
  padding-left: 2px;
  background: linear-gradient(#fff8, #fff0 40%);
}
.titlebar h1 {
  flex: 1;
  margin-left: 1px;
  font: 8px/12px Lato, sans-serif;
  color: #111;
}
.swap, .wbtns { align-self: flex-start; height: 12px; border: 1px solid #999; border-top: 0; border-radius: 0 0 3px 3px; }
.swap { width: 20px; margin-right: 9px; background: #eee; }
.titlebar button svg { display: block; width: 12px; height: 8px; margin: auto; }
.wbtns { display: flex; overflow: hidden; background: linear-gradient(#eee, #ccc); }
.wbtns button { width: 18px; border-right: 1px solid #999; }
.wbtns .close { width: 30px; border: 0; background: linear-gradient(#e39a86, #cf4a33 50%, #c43c26 55%, #dd7a5c); }

.client {
  flex: 1;
  min-height: 0;
  display: flex;
  flex-direction: column;
  border: 1px solid #8c9097;
  background: #cfd6e2;
}

/* menu bar */
.menubar {
  flex: none;
  height: 15px;
  display: flex;
  align-items: stretch;
  padding-left: 1px;
  background: linear-gradient(#d2d6df, #c9ceda);
  color: #3e4656;
}
.menubar > button, .drop > button { padding: 0 5px; }
.grip {
  flex: none;
  width: 4px;
  height: 11px;
  margin: 0 2px;
  align-self: center;
  background: radial-gradient(circle at 1px 1px, #8f9aae 0 1px, transparent 1px) 1px 1px / 3px 3px repeat-y;
}
.menubar .grip { margin: 0 1px; }
.logo { width: 12px; height: 10px; margin: 2px 0 0 0; flex: none; }
.drop { position: relative; display: flex; margin: 0 1px 0 2px; }
.drop > .active {
  position: relative;
  border: 1px solid #8f96a4;
  border-bottom: 0;
  padding: 0 4px;
  background: linear-gradient(#f2f3f6, #dfe3ea);
}
.mdi { margin-left: auto; display: flex; align-items: center; gap: 2px; padding-right: 3px; }
.mdi svg { width: 8px; height: 8px; display: block; }
.menu {
  position: absolute;
  z-index: 5;
  top: 14px;
  left: 0;
  width: 244px;
  padding: 1px 1px 2px;
  border: 1px solid #8b929e;
  box-shadow: 2px 2px 2px #0008;
  background: linear-gradient(90deg, #e6ebf4 0, #dbe1ee 15px, #fcfcfd 16px);
}
.menu button {
  width: 100%;
  height: 14px;
  display: flex;
  align-items: center;
  gap: 6px;
  padding-left: 1px;
  color: #444a54;
}
.menu button:disabled { color: #a9abb0; }
.menu .hot { background: linear-gradient(#fff6cf, #fbe694 45%, #f5cf4e 50%, #fbe38c); border-radius: 2px; color: #5e5636; }
.menu hr { height: 1px; margin: 3px 0 2px 18px; border: 0; background: #c2c6ce; }
.cursor { position: absolute; left: 213px; top: 63px; width: 28px; height: 32px; pointer-events: none; }

/* toolbars */
.toolbar {
  flex: none;
  height: 17px;
  display: flex;
  align-items: center;
  margin-right: 1px;
  background: linear-gradient(#f1f4fb, #e3e9f4 55%, #ccd6e6);
  border-bottom: 1px solid #bcc6d6;
}
.toolbar button { flex: none; width: 14px; height: 15px; padding: 1px; }
.toolbar.second { margin-right: 60px; }
.right { margin-left: auto; display: flex; align-items: center; }
.sep { flex: none; width: 2px; height: 11px; margin: 0 2px; border-left: 1px solid #b4bfd0; background: #f6f8fc; }
.toolbar .on { background: linear-gradient(#fde3a4, #fbc35c); box-shadow: inset 0 0 0 1px #d9a850; }
.toolbar .strong { background: linear-gradient(#fbcb80, #f8ac48 50%, #fdd680); }
.toolbar .more { width: 6px; color: #2a50b0; }
.stub { width: 5px; }
.toolbar .arrow { width: 6px; }
.toolbar .wide { width: 10px; }
.arrow::after, .cap::after {
  content: "";
  display: block;
  margin: auto;
  width: 0;
  border: 2px solid transparent;
  border-top-color: #444;
  border-bottom: 0;
}
.toolbar .lab { display: flex; flex-direction: column; align-items: center; padding: 2px 1px 0; color: #6d7482; font-size: 6px; line-height: 6px; }
.lab .ic { margin-bottom: -6px; }
.toolbar.third { padding-left: 5px; margin: 0; }
.toolbar .roomy { width: 18px; padding: 1px 3px; }
.combo { flex: 1 1 85px; min-width: 60px; max-width: 87px; height: 13px; display: flex; position: relative; background: #fff; }
.combo select { width: 100%; padding: 0 0 0 2px; border: 0; appearance: none; background: #fff; color: #111; font: inherit; }
.combo::after { content: ""; position: absolute; right: 0; top: 0; width: 9px; height: 13px; background: linear-gradient(#555, #555) 3px 5px / 4px 1px no-repeat, linear-gradient(#555, #555) 4px 6px / 2px 1px no-repeat, #e6ebf3; pointer-events: none; }

/* main split */
.main { flex: 1; min-height: 0; display: grid; grid-template-columns: 196px minmax(0, 1fr); column-gap: 5px; padding-right: 2px; }
.navigator, .work { min-width: 0; min-height: 0; display: flex; flex-direction: column; }
.ptitle { flex: none; display: flex; align-items: center; height: 13px; padding-left: 2px; background: linear-gradient(#bcc5d1, #b1bbc9); color: #3c4654; }
.treebox {
  flex: 1;
  min-height: 0;
  display: grid;
  grid-template: minmax(0, 1fr) 12px / minmax(0, 1fr) 10px;
  margin: 1px 0 0 2px;
  border: 1px solid #9aa4b3;
  border-width: 1px 1px 1px 0;
  background: #fcfcf6;
}
.treeclip { overflow: hidden; min-height: 0; }
.tree {
  height: calc(100% + 6px);
  display: grid;
  grid-auto-rows: minmax(0, 1fr);
  list-style: none;
  font: 8px/11px Lato, sans-serif;
  color: #151515;
}
.tree li { display: flex; align-items: center; min-height: 0; white-space: nowrap; padding-left: 2px; }
.tree .ic { height: 11px; margin-right: 2px; }
.tree .l0 { font-weight: bold; }
.tree .l1 { padding-left: 14px; background: linear-gradient(#c8c8c8, #c8c8c8) 20px 0 / 1px 100% no-repeat; }
.tree .l2 { padding-left: 26px; background: linear-gradient(#c8c8c8, #c8c8c8) 20px 0 / 1px 100% no-repeat, linear-gradient(#c8c8c8, #c8c8c8) 32px 0 / 1px 100% no-repeat; }
.tree .end { background-size: 1px 100%, 1px 50%; }
.tree .l1:nth-child(23) ~ .l2 { background-size: 0 0, 1px 100%; }
.x { flex: none; position: relative; width: 12px; height: 11px; background: linear-gradient(#c8c8c8, #c8c8c8) 6px 5px / 6px 1px no-repeat; }
.plus::after, .minus::after {
  content: "";
  position: absolute;
  left: 3px;
  top: 2px;
  width: 7px;
  height: 7px;
  border: 1px solid #b4b8c0;
  border-radius: 1px;
  background: linear-gradient(#5a68a0, #5a68a0) 1px 2px / 3px 1px no-repeat, #fff;
}
.plus::after { background: linear-gradient(#5a68a0, #5a68a0) 1px 2px / 3px 1px no-repeat, linear-gradient(#5a68a0, #5a68a0) 2px 1px / 1px 3px no-repeat, #fff; }

/* scroll bars */
.vbar { display: flex; flex-direction: column; background: #f0f0f0; min-height: 0; }
.vbar .thumb, .hbar .thumb { display: flex; align-items: center; justify-content: center; border: 1px solid #a0a3a8; border-radius: 2px; }
.vbar .thumb { flex: 0 0 62%; background: linear-gradient(90deg, #f4f4f4, #d3d5d9); }
.vbar .thumb i { width: 5px; height: 6px; background: repeating-linear-gradient(#777 0 1px, #fff 1px 2px); }
.vbar .down { margin-top: auto; }
.cap { flex: none; display: flex; width: 10px; height: 10px; }
.up::after { transform: rotate(180deg); }
.left::after { transform: rotate(90deg); }
.rightc::after { transform: rotate(-90deg); }
.hbar { display: flex; align-items: center; background: #f0f0f0; grid-column: 1 / -1; padding-right: 12px; }
.hbar .thumb { flex: 0 0 88px; height: 10px; background: linear-gradient(#f4f4f4, #cfd1d5); }
.hbar .thumb i { width: 6px; height: 4px; background: repeating-linear-gradient(90deg, #777 0 1px, #fff 1px 2px); }
.hbar .rightc { margin-left: auto; }

.navtabs { flex: none; height: 16px; display: flex; align-items: center; gap: 3px; padding-left: 2px; background: #ccd3de; color: #39414e; }
.navtabs button { display: flex; align-items: center; gap: 1px; height: 13px; padding: 0 2px; font: 8px/11px Lato, sans-serif; }
.navtabs .active { background: #f3f5f9; border-radius: 0 0 2px 2px; }

/* model view */
.view { flex: 1; min-height: 0; background: #000; overflow: hidden; }
.scene { display: block; width: 100%; height: 100%; font: 8px "Liberation Sans", sans-serif; }

/* load table */
.loads { flex: none; margin-top: 4px; font-family: "Liberation Sans", Arial, sans-serif; }
.loads .ptitle, .combo { font-family: "Open Sans", sans-serif; }
.loads .ptitle { height: 12px; }
.pin { margin-left: auto; display: flex; gap: 3px; padding-right: 2px; }
.pin svg { display: block; width: 8px; height: 8px; }
.sheet { display: flex; height: 101px; padding: 2px 1px 4px; border: 1px solid #878d96; border-width: 1px 1px 2px; background: #f0f0f0; }
.sheet table { flex: 1; width: 100%; table-layout: fixed; border-collapse: collapse; }
.cn { width: 29px; }
.ca { width: 86px; }
.cv { width: 43px; }
th { padding: 0; font-weight: normal; line-height: 8px; }
th, td { height: 10px; border: 1px solid #b6b6b6; }
td { padding: 0; background: #fff; }
td:last-child { background: #f0f0f0; }
tbody th, .letters th { border-color: #8e8e8e; background: #e6e6e6; }
.letters .nr, .names .low { vertical-align: bottom; }
.letters .nr { border-color: #b6b6b6; background: #f0f0f0; padding-bottom: 4px; }
.names th { border-top-color: #f0f0f0; border-bottom-color: #f0f0f0; }
.names .low { padding-bottom: 1px; }
.names small { font-size: 6px; }
th.sel, .letters th.sel { background: #2f8ff0; color: #fff; }
td.focus { outline: 1px solid #555; outline-offset: -1px; }
.sheet .vbar .thumb { flex: 1; }
.sheettabs { display: flex; height: 12px; background: #eceff0; }
.sheettabs button { height: 11px; padding: 0 3px; border: 1px solid #555; border-width: 0 1px 1px 0; border-radius: 0 0 3px 3px; background: #ececec; }
.sheettabs .active { background: #fff; border-color: #999; }
.strip { height: 11px; border-top: 1px solid #b4b8bd; background: #f0eceb; }

/* status bar */
.status { flex: none; height: 14px; display: flex; align-items: center; gap: 2px; padding: 0 0 0 2px; background: linear-gradient(#d3d8df, #abb3bf 35%, #b9c0ca 60%, #d3d8df); font-family: "Liberation Sans", Arial, sans-serif; color: #2b323c; }
.status p { flex: 0 0 262px; }
.status button { height: 12px; padding: 0 4px 0 1px; border: 1px solid #7e8794; border-color: #5f6874 #e8ebef #e8ebef #5f6874; }
.cells { flex: 1; display: flex; justify-content: flex-end; gap: 47px; padding-right: 58px; }
.cells i { width: 1px; height: 11px; background: #8e98a5; }
```
